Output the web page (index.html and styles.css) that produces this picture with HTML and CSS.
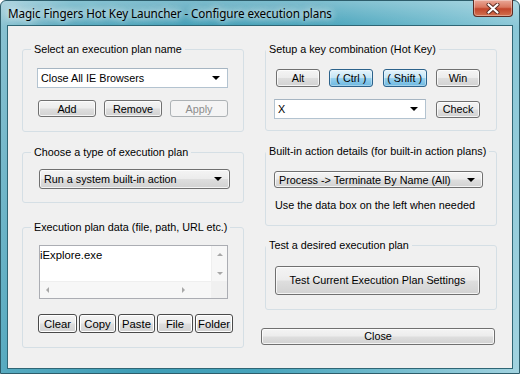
FILE: index.html
```html
<!DOCTYPE html>
<html>
<head>
<meta charset="utf-8">
<link rel="stylesheet" href="styles.css">
</head>
<body>
<div class="window">
  <div class="titlebar">
    <span class="title">Magic Fingers Hot Key Launcher - Configure execution plans</span>
    <div class="close-btn">
      <svg width="14" height="11" viewBox="0 0 14 11">
        <path d="M2.5 1.5 L11.5 9.5 M11.5 1.5 L2.5 9.5" stroke="#5a2a22" stroke-width="4" stroke-linecap="round"/>
        <path d="M2.5 1.5 L11.5 9.5 M11.5 1.5 L2.5 9.5" stroke="#ffffff" stroke-width="2.2" stroke-linecap="round"/>
      </svg>
    </div>
  </div>
  <div class="client">
    <div class="col col-left">
      <fieldset class="group g1">
        <legend>Select an execution plan name</legend>
        <div class="combo edit w-name"><span>Close All IE Browsers</span><i class="arrow"></i></div>
        <div class="row name-btns">
          <div class="btn b58">Add</div>
          <div class="btn b58">Remove</div>
          <div class="btn b58 disabled">Apply</div>
        </div>
      </fieldset>
      <fieldset class="group g2">
        <legend>Choose a type of execution plan</legend>
        <div class="combo list w-type"><span>Run a system built-in action</span><i class="arrow"></i></div>
      </fieldset>
      <fieldset class="group g3">
        <legend>Execution plan data (file, path, URL etc.)</legend>
        <div class="memo">
          <div class="memo-text">iExplore.exe</div>
          <div class="vscroll"><i class="sa up"></i><i class="sa down"></i></div>
          <div class="hscroll"><i class="sa left"></i><i class="sa right"></i></div>
          <div class="corner"></div>
        </div>
        <div class="row data-btns">
          <div class="btn old w38">Clear</div>
          <div class="btn old w36">Copy</div>
          <div class="btn old w36">Paste</div>
          <div class="btn old w35">File</div>
          <div class="btn old w37">Folder</div>
        </div>
      </fieldset>
    </div>
    <div class="col col-right">
      <fieldset class="group ga">
        <legend>Setup a key combination (Hot Key)</legend>
        <div class="row keys">
          <div class="btn key">Alt</div>
          <div class="btn key checked">( Ctrl )</div>
          <div class="btn key checked">( Shift )</div>
          <div class="btn key">Win</div>
        </div>
        <div class="row keyrow">
          <div class="combo edit w-key"><span>X</span><i class="arrow"></i></div>
          <div class="btn key check">Check</div>
        </div>
      </fieldset>
      <fieldset class="group gb">
        <legend>Built-in action details (for built-in action plans)</legend>
        <div class="combo list w-action"><span>Process -&gt; Terminate By Name (All)</span><i class="arrow"></i></div>
        <div class="hint">Use the data box on the left when needed</div>
      </fieldset>
      <fieldset class="group gc">
        <legend>Test a desired execution plan</legend>
        <div class="btn test">Test Current Execution Plan Settings</div>
      </fieldset>
      <div class="btn close">Close</div>
    </div>
  </div>
</div>
</body>
</html>
```
FILE: styles.css
```css
html, body {
  margin: 0;
  padding: 0;
  background: #ffffff;
}

.window {
  width: 520px;
  height: 374px;
  box-sizing: border-box;
  display: flex;
  flex-direction: column;
  border-radius: 6px 6px 0 0;
  border: 1px solid #2d5d6b;
  background:
    linear-gradient(to bottom, rgba(255,255,255,0.30), rgba(255,255,255,0) 26px),
    linear-gradient(100deg, #8ec4d3 0%, #55a9bf 12%, #3e9db6 35%, #46a3bb 55%, #6cb8cb 75%, #a2d3e0 100%);
  font-family: "Liberation Sans", Arial, sans-serif;
  font-size: 10.8px;
  color: #000;
}

.titlebar {
  height: 24px;
  display: flex;
  justify-content: space-between;
  align-items: flex-start;
  padding: 0 6px 0 7px;
  flex: none;
}

.title {
  font-family: "Noto Sans", "Open Sans", sans-serif;
  font-size: 11.7px;
  color: #000;
  padding-top: 4px;
  line-height: 16px;
  text-shadow: 0 0 6px rgba(255,255,255,0.9), 0 0 10px rgba(255,255,255,0.7), 0 0 14px rgba(255,255,255,0.5);
  letter-spacing: -0.1px;
  white-space: nowrap;
}

.close-btn {
  width: 40px;
  height: 17px;
  margin-top: -1px;
  box-sizing: border-box;
  border: 1px solid #5b2a22;
  border-top: none;
  border-radius: 0 0 4px 4px;
  background: linear-gradient(to bottom, #eaa898 0%, #d9775f 45%, #c2452b 55%, #d2714f 100%);
  box-shadow: inset 0 0 0 1px rgba(255,255,255,0.35);
  display: flex;
  align-items: center;
  justify-content: center;
}

.client {
  margin: 0 6px;
  flex: 1;
  margin-bottom: 4px;
  border: 1px solid #2f6675;
  background: #f0f0f0;
  display: grid;
  grid-template-columns: 222px 232px;
  column-gap: 21px;
  padding: 17px 15px 0 14px;
  align-content: start;
}

.col {
  display: flex;
  flex-direction: column;
}

.group {
  margin: 0;
  border: 1px solid #d5dfe5;
  border-radius: 3px;
  min-inline-size: 0;
}

.group legend {
  padding: 0 3px;
  line-height: 13px;
  font-size: 10.8px;
  white-space: nowrap;
}

.col-left .group {
  padding: 0 14px;
}
.col-left .group legend {
  margin-left: -6px;
}

.col-right .group {
  padding: 0 8px;
}
.col-right .group legend {
  margin-left: -8px;
}

.row {
  display: flex;
}

/* Buttons */
.btn {
  box-sizing: border-box;
  border: 1px solid #707070;
  border-radius: 3px;
  background: linear-gradient(to bottom, #f4f4f4 0%, #ececec 48%, #dedede 52%, #d2d2d2 100%);
  box-shadow: inset 0 0 0 1px rgba(255,255,255,0.75);
  display: flex;
  align-items: center;
  justify-content: center;
  font-size: 10.8px;
  color: #000;
  white-space: nowrap;
  flex: none;
}

.btn.disabled {
  border-color: #adb2b5;
  background: #f4f4f4;
  box-shadow: none;
  color: #8d8d8d;
}

.btn.checked {
  border-color: #2c628b;
  background: linear-gradient(to bottom, #e5f4fc 0%, #c4e5f6 48%, #98d1ef 52%, #6db8e0 100%);
  box-shadow: inset 0 0 0 1px rgba(255,255,255,0.35);
}

.btn.old {
  border: 1px solid #4a4a4a;
  border-radius: 3px;
  height: 19px;
  box-shadow: inset 0 0 0 1px #ffffff;
  font-size: 11.3px;
}

/* Combos */
.combo {
  box-sizing: border-box;
  display: flex;
  align-items: center;
  justify-content: space-between;
  font-size: 10.8px;
  flex: none;
  white-space: nowrap;
}

.combo.edit {
  background: #ffffff;
  border: 1px solid #b3c3d0;
  border-top-color: #a6b5c2;
  padding: 0 0 0 3px;
}

.combo.list {
  border: 1px solid #707070;
  border-radius: 3px;
  background: linear-gradient(to bottom, #f4f4f4 0%, #ececec 48%, #dedede 52%, #d2d2d2 100%);
  box-shadow: inset 0 0 0 1px rgba(255,255,255,0.75);
  padding: 0 0 0 4px;
}

.arrow {
  width: 0;
  height: 0;
  border-left: 4px solid transparent;
  border-right: 4px solid transparent;
  border-top: 4px solid #000;
  margin-right: 7px;
}

/* Left group 1 */
.w-name {
  width: 191px;
  height: 20px;
  margin-top: 12px;
}
.name-btns {
  margin-top: 12px;
  margin-left: 1px;
  gap: 8px;
  margin-bottom: 14px;
}
.b58 {
  width: 58px;
  height: 17px;
}

/* Left group 2 */
.g2 {
  margin-top: 14px !important;
}
.w-type {
  width: 191px;
  height: 20px;
  margin-top: 10px;
  margin-left: 2px;
  margin-bottom: 13px;
}

/* Left group 3 */
.g3 {
  margin-top: 17.5px !important;
}
.memo {
  margin-top: 11.5px;
  margin-left: 2px;
  width: 189px;
  height: 54px;
  box-sizing: border-box;
  border: 1px solid #abadb3;
  background: #ffffff;
  display: grid;
  grid-template-columns: 1fr 16px;
  grid-template-rows: 1fr 17px;
}
.memo-text {
  font-size: 11.3px;
  padding: 3px 0 0 0;
  line-height: 13px;
}
.vscroll {
  background: #f7f7f7;
  border-left: 1px solid #efefef;
  display: flex;
  flex-direction: column;
  align-items: center;
  justify-content: space-between;
  padding: 7px 0 6px;
}
.hscroll {
  background: #f7f7f7;
  border-top: 1px solid #efefef;
  display: flex;
  align-items: center;
  justify-content: space-between;
  padding: 0 26px 0 6px;
}
.corner {
  background: #f0f0f0;
}
.sa {
  width: 0;
  height: 0;
}
.sa.up {
  border-left: 3px solid transparent;
  border-right: 3px solid transparent;
  border-bottom: 3px solid #a8a8a8;
}
.sa.down {
  border-left: 3px solid transparent;
  border-right: 3px solid transparent;
  border-top: 3px solid #a8a8a8;
}
.sa.left {
  border-top: 3px solid transparent;
  border-bottom: 3px solid transparent;
  border-right: 3px solid #a8a8a8;
}
.sa.right {
  border-top: 3px solid transparent;
  border-bottom: 3px solid transparent;
  border-left: 3px solid #a8a8a8;
}
.data-btns {
  margin-top: 15px;
  margin-left: 1px;
  gap: 2px;
  margin-bottom: 14px;
}
.w38 { width: 39px; }
.w36 { width: 37px; }
.w35 { width: 36px; }
.w37 { width: 38px; }

/* Right group A */
.keys {
  margin-top: 13px;
  margin-left: 2px;
  width: 204px;
  justify-content: space-between;
}
.key {
  width: 44px;
  height: 18px;
}
.keyrow {
  margin-top: 12px;
  width: 206px;
  justify-content: space-between;
  align-items: center;
  margin-bottom: 11px;
}
.w-key {
  width: 152px;
  height: 20px;
}
.check {
  height: 17px;
}

/* Right group B */
.gb {
  margin-top: 14px !important;
}
.w-action {
  width: 209px;
  height: 17px;
  margin-top: 13px;
}
.hint {
  margin-top: 10.5px;
  margin-left: 1px;
  line-height: 13px;
  margin-bottom: 13px;
  white-space: nowrap;
}

/* Right group C */
.gc {
  margin-top: 13.5px !important;
}
.test {
  width: 205px;
  height: 29px;
  margin-top: 13.5px;
  margin-left: 1px;
  margin-bottom: 14px;
}

.close {
  margin-top: 18px;
  margin-left: -4px;
  width: 234px;
  height: 17px;
}
```
